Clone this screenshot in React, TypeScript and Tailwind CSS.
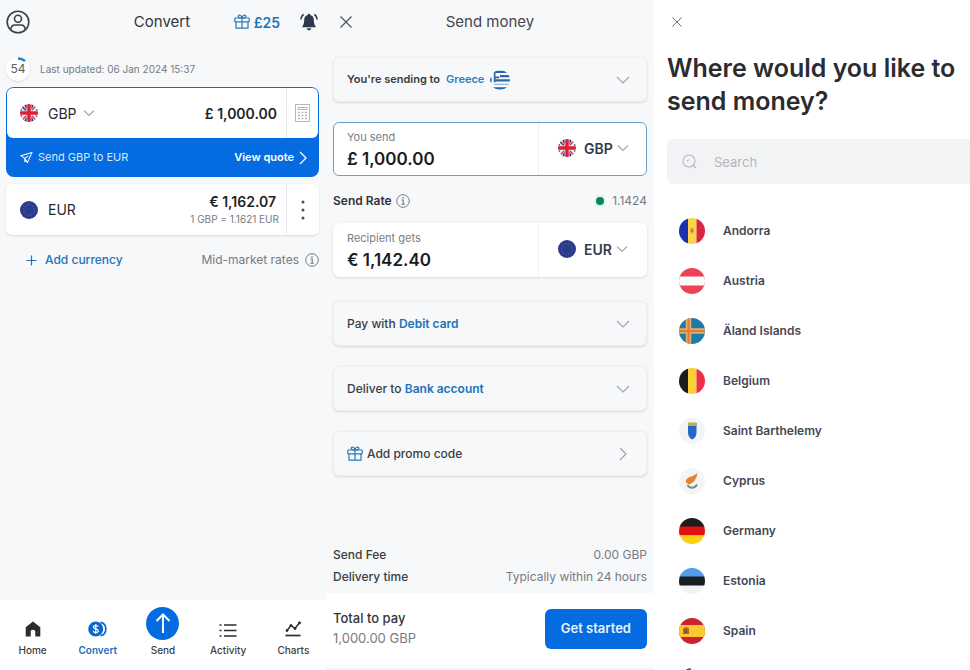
import { useState, type ReactNode } from "react";

/* ---------- Flags ---------- */

function Flag({ children, className = "size-[26px]" }: { children: ReactNode; className?: string }) {
  return (
    <svg viewBox="0 0 26 26" aria-hidden="true" className={`${className} shrink-0 overflow-hidden rounded-full`}>
      {children}
    </svg>
  );
}

function UkFlag() {
  return (
    <Flag className="size-[18px]">
      <rect width="26" height="26" fill="#f3f4f8" />
      <g fill="#2a3470">
        <path d="M0 9.5V5.5L4 9.5Z M5 0H9.5V8Z M3 3L9.5 9.5H7L1 4Z" />
        <path d="M26 9.5V5.5L22 9.5Z M21 0H16.5V8Z" />
        <path d="M0 16.5V20.5L4 16.5Z M5 26H9.5V18Z" />
        <path d="M26 16.5V20.5L22 16.5Z M21 26H16.5V18Z" />
      </g>
      <path d="M3 3L9 9M23 3L17 9M3 23L9 17M23 23L17 17" stroke="#d5364a" strokeWidth="2" />
      <path d="M13 0V26M0 13H26" stroke="#dd1f35" strokeWidth="5" />
    </Flag>
  );
}

function EuFlag() {
  return (
    <Flag className="size-[18px]">
      <rect width="26" height="26" fill="#2a3a8c" />
      <circle cx="13" cy="13" r="7.5" fill="none" stroke="#7d83a0" strokeWidth="1.3" strokeDasharray="1.4 2.53" />
    </Flag>
  );
}

function GreeceFlag() {
  return (
    <Flag className="size-5">
      <rect width="26" height="26" fill="#f6f8fa" />
      <path d="M6 2.5H26M13 8H26M6 13.500H26M3 24H23" stroke="#2a66ab" strokeWidth="3" />
      <path d="M5 18.500H26" stroke="#7ba3cd" strokeWidth="1.500" />
      <path d="M1 10V16M6 3V16M6 9.500H12" stroke="#2a66ab" strokeWidth="2.200" />
    </Flag>
  );
}

const countries: { name: string; flag: ReactNode }[] = [
  {
    name: "Andorra",
    flag: (
      <>
        <rect width="9" height="26" fill="#1a2fae" />
        <rect x="9" width="8.5" height="26" fill="#fbd44a" />
        <rect x="17.5" width="9" height="26" fill="#dc2540" />
        <path d="M11 10H15V14L13 16.5L11 14Z" fill="#e5a640" />
        <path d="M12 11.5H14V14H12Z" fill="#c97a3a" />
      </>
    ),
  },
  {
    name: "Austria",
    flag: (
      <>
        <rect width="26" height="26" fill="#ee4056" />
        <rect y="8.5" width="26" height="9" fill="#fafafa" />
      </>
    ),
  },
  {
    name: "Äland Islands",
    flag: (
      <>
        <rect width="26" height="26" fill="#1e7ba8" />
        <path d="M9.5 0V26M0 13H26" stroke="#e8ae5c" strokeWidth="5.500" />
        <path d="M9.5 0V26M0 13H26" stroke="#e07a45" strokeWidth="2" />
      </>
    ),
  },
  {
    name: "Belgium",
    flag: (
      <>
        <rect width="9" height="26" fill="#1c1c1c" />
        <rect x="9" width="8.5" height="26" fill="#fccf35" />
        <rect x="17.5" width="9" height="26" fill="#ee2f45" />
      </>
    ),
  },
  {
    name: "Saint Barthelemy",
    flag: (
      <>
        <rect width="26" height="26" fill="#f3f4f6" />
        <path d="M9 5H17.5V14C17.500 18.500 15.500 20.500 13.200 21.500C11 20.500 9 18.500 9 14Z" fill="#2767c9" />
        <path d="M9 4.500H17.500V8H9Z" fill="#b3b34a" />
      </>
    ),
  },
  {
    name: "Cyprus",
    flag: (
      <>
        <rect width="26" height="26" fill="#f3f4f6" />
        <path d="M7 14C6.500 11 9 9.500 12 8.500C14.500 8 16.500 6 18.500 5C18 8 17.500 10 16 11.500C16 13.500 13 14.500 11.500 16C9.500 16.500 8 16 7 14Z" fill="#e58435" />
        <path d="M8.500 17C10.500 20.500 15.500 21 18 16.500" fill="none" stroke="#6f927b" strokeWidth="1.8" />
      </>
    ),
  },
  {
    name: "Germany",
    flag: (
      <>
        <rect width="26" height="9" fill="#1d1b1b" />
        <rect y="8.500" width="26" height="9" fill="#e11212" />
        <rect y="17.500" width="26" height="9" fill="#fdcf14" />
      </>
    ),
  },
  {
    name: "Estonia",
    flag: (
      <>
        <rect width="26" height="26" fill="#f1f2f3" />
        <rect width="26" height="9" fill="#549de6" />
        <rect y="8.500" width="26" height="9" fill="#1b1e20" />
      </>
    ),
  },
  {
    name: "Spain",
    flag: (
      <>
        <rect width="26" height="26" fill="#cf2230" />
        <rect y="7" width="26" height="12" fill="#fcc92c" />
        <path d="M4 10.500L7 9L10 10.500V16H4Z" fill="#b0622b" />
        <path d="M6 12H8V15H6Z" fill="#8e4630" />
      </>
    ),
  },
  {
    name: "Finland",
    flag: (
      <>
        <rect width="26" height="26" fill="#f1f4f8" />
        <path d="M9.500 0V26M0 13H26" stroke="#28569c" strokeWidth="4.500" />
      </>
    ),
  },
];

/* ---------- Icons ---------- */

function ChevronDown() {
  return (
    <svg viewBox="0 0 14 14" aria-hidden="true" className="pointer-events-none size-3.5 shrink-0 text-[#a3a6ab]" fill="none" stroke="currentColor" strokeWidth="1.2">
      <path d="M1 4L7 10L13 4" />
    </svg>
  );
}

function SmallChevronDown() {
  return (
    <svg viewBox="0 0 12 12" aria-hidden="true" className="pointer-events-none size-3 shrink-0 text-[#a3a6ab]" fill="none" stroke="currentColor" strokeWidth="1.2">
      <path d="M1 3.500L6 8.500L11 3.500" />
    </svg>
  );
}

function ChevronRight({ className }: { className: string }) {
  return (
    <svg viewBox="0 0 14 14" aria-hidden="true" className={`size-3.5 shrink-0 ${className}`} fill="none" stroke="currentColor" strokeWidth="1.300">
      <path d="M4 1L10 7L4 13" />
    </svg>
  );
}

function CloseIcon({ className }: { className: string }) {
  return (
    <svg viewBox="0 0 12 12" aria-hidden="true" className={className} fill="none" stroke="currentColor" strokeWidth="1.200">
      <path d="M0.500 0.500L11.500 11.500M11.500 0.500L0.500 11.500" />
    </svg>
  );
}

function GiftIcon() {
  return (
    <svg viewBox="0 0 16 16" aria-hidden="true" className="size-4 shrink-0 text-[#2b78b8]" fill="none" stroke="currentColor" strokeWidth="1.200" strokeLinejoin="round">
      <rect x="0.800" y="4" width="14.400" height="3.800" rx="0.600" />
      <path d="M2 7.800V14.200H14V7.800M8 4V14.200" />
      <path d="M8 4C4.500 4 3.800 2.800 4.300 1.800C5.200 0.400 7.500 1.200 8 4C8.500 1.200 10.800 0.400 11.700 1.800C12.200 2.800 11.500 4 8 4Z" />
    </svg>
  );
}

function InfoIcon() {
  return (
    <svg viewBox="0 0 14 14" aria-hidden="true" className="size-3.5 shrink-0 text-[#767b85]" fill="none" stroke="currentColor">
      <circle cx="7" cy="7" r="6.300" strokeWidth="1" />
      <path d="M5.600 6H7.200V10.200M5.200 10.300H9" strokeWidth="1.100" />
      <circle cx="7" cy="3.900" r="0.800" fill="currentColor" stroke="none" />
    </svg>
  );
}

function UserIcon() {
  return (
    <svg viewBox="0 0 24 24" aria-hidden="true" className="size-6" fill="none" stroke="#3a3f4d" strokeWidth="1.600">
      <circle cx="12" cy="12" r="10.800" />
      <circle cx="12" cy="8.800" r="3.500" />
      <path d="M4.800 19.500C5 16.500 6.500 15 9 15H15C17.500 15 19 16.500 19.200 19.500" />
    </svg>
  );
}

function BellIcon() {
  return (
    <svg viewBox="0 0 18 18" aria-hidden="true" className="size-[18px]" fill="#2e374c">
      <path d="M9 0.800C9.800 0.800 10.200 1.300 10.200 2C12.800 2.500 13.800 4.500 13.800 7C13.800 10.500 14.600 11.800 15.600 13.200V14.200H2.400V13.200C3.400 11.800 4.200 10.500 4.200 7C4.200 4.500 5.200 2.500 7.800 2C7.800 1.300 8.200 0.800 9 0.800Z" />
      <path d="M6.800 15.200H11.200C10.900 16.700 10.200 17.300 9 17.300S7.100 16.700 6.800 15.200Z" />
      <path d="M3.700 1.300C1.800 2.500 1 4.300 0.900 6.500M14.300 1.300C16.200 2.500 17 4.300 17.100 6.500" fill="none" stroke="#2e374c" strokeWidth="1.400" />
    </svg>
  );
}

function CalculatorIcon() {
  return (
    <svg viewBox="0 0 15 18" aria-hidden="true" className="h-[18px] w-[15px]" fill="none" stroke="#b3b6ba" strokeWidth="1">
      <rect x="0.500" y="0.500" width="14" height="17" />
      <path d="M3 3.500H12V5.500H3Z" />
      <path d="M3 8.500H12M3 11.500H12M3 14.500H12" strokeDasharray="2 1.500" strokeWidth="1.300" />
    </svg>
  );
}

function PlaneIcon() {
  return (
    <svg viewBox="0 0 14 14" aria-hidden="true" className="size-[13px] shrink-0" fill="none" stroke="#ffffff" strokeWidth="1.100" strokeLinejoin="round">
      <path d="M13 1.500L0.800 5L5.200 8L8 12.500Z" />
      <path d="M5.200 8L9 5.200M5.200 8V11.500L6.500 10.200" />
    </svg>
  );
}

/* ---------- Convert screen ---------- */

const tabs: { label: string; icon: ReactNode }[] = [
  {
    label: "Home",
    icon: (
      <svg viewBox="0 0 16 16" className="size-4" fill="#2c2c2e">
        <path d="M8 0.500L15.300 6.200V15.500H10.300V11C10.300 9.700 9.300 8.800 8 8.800S5.700 9.700 5.700 11V15.500H0.700V6.200Z" />
      </svg>
    ),
  },
  {
    label: "Convert",
    icon: (
      <svg viewBox="0 0 19 16" className="h-4 w-[19px]" fill="none">
        <circle cx="7.700" cy="8" r="7.500" fill="#0b68cb" />
        <path d="M12.500 1.300C19.600 2.500 19.600 13.500 12.500 14.700" stroke="#0b68cb" strokeWidth="1.700" />
        <path d="M10.200 6C10 4.900 9 4.500 7.800 4.500C6.500 4.500 5.400 5 5.400 6.200C5.400 8.500 10.300 7.200 10.300 9.700C10.300 11 9.100 11.500 7.800 11.500C6.400 11.500 5.400 11 5.200 9.800M7.800 3V13" stroke="#ffffff" strokeWidth="1.200" />
      </svg>
    ),
  },
  {
    label: "Send",
    icon: (
      <span className="flex size-[33px] items-center justify-center rounded-full bg-[#046be0]">
        <svg viewBox="0 0 20 20" className="size-5" fill="none" stroke="#ffffff" strokeWidth="2">
          <path d="M10 20V1M3.500 8L10 1.500L16.500 8" />
        </svg>
      </span>
    ),
  },
  {
    label: "Activity",
    icon: (
      <svg viewBox="0 0 18 14" className="h-3.5 w-[18px]" fill="none" stroke="#2c2c2e" strokeWidth="1.600">
        <path d="M0.500 2H2.500M0.500 7.500H2.500M0.500 13H2.500M5 2H17.500M5 7.500H17.500M5 13H17.500" />
      </svg>
    ),
  },
  {
    label: "Charts",
    icon: (
      <svg viewBox="0 0 18 16" className="h-4 w-[18px]" fill="#2c2c2e" stroke="#2c2c2e">
        <path d="M3 9.500L7 4.500L11 7.500L15.500 1.800" fill="none" strokeWidth="1.500" />
        <circle cx="3" cy="9.500" r="1" />
        <circle cx="7" cy="4.500" r="1" />
        <circle cx="11" cy="7.500" r="1" />
        <circle cx="15.500" cy="1.800" r="1" />
        <path d="M1.500 14.500H16.500" strokeWidth="1.700" />
      </svg>
    ),
  },
];

function ConvertScreen() {
  return (
    <section className="flex min-w-0 flex-col bg-[#f6f8fa]">
      <header className="grid h-11 grid-cols-[1fr_auto_1fr] items-center pr-2 pl-1.5">
        <button type="button" aria-label="Profile" className="justify-self-start">
          <UserIcon />
        </button>
        <h1 className="text-[15px] text-[#333539]">Convert</h1>
        <div className="flex items-center justify-end gap-5">
          <button type="button" className="flex items-center gap-1 text-[14px] font-semibold text-[#2273b9]">
            <GiftIcon />
            £25
          </button>
          <button type="button" aria-label="Notifications">
            <BellIcon />
          </button>
        </div>
      </header>

      <div className="mt-[11px] flex h-7 items-center gap-2.5 px-1.5">
        <span className="relative flex size-6 items-center justify-center rounded-full bg-white text-[12px] text-[#5b5e64] shadow-sm">
          54
          <svg viewBox="0 0 24 24" aria-hidden="true" className="absolute inset-0 size-6" fill="none" stroke="#2380bb" strokeWidth="2.500">
            <path d="M12 1.500Q16 1.500 19 4" />
          </svg>
        </span>
        <p className="text-[10px] text-[#777b82]">Last updated: 06 Jan 2024 15:37</p>
      </div>

      <div className="mt-1 mr-[7px] ml-1.5 rounded-lg bg-[#046be0] px-px pt-px">
        <div className="flex h-[50px] items-center rounded-md bg-white">
          <label className="flex items-center gap-2.5 pl-[13px]">
            <UkFlag />
            <span className="flex items-center gap-1.5">
              <select aria-label="Base currency" className="appearance-none bg-transparent text-[14px] text-[#27292d] [field-sizing:content]">
                <option>GBP</option>
              </select>
              <SmallChevronDown />
            </span>
          </label>
          <input
            aria-label="Base amount"
            defaultValue="£ 1,000.00"
            className="h-full min-w-0 flex-1 pr-[9px] text-right text-[14px] font-semibold text-[#1d1f23] outline-none"
          />
          <button type="button" aria-label="Calculator" className="flex h-full w-8 items-center justify-center border-l border-[#e9ebee]">
            <CalculatorIcon />
          </button>
        </div>
        <div className="flex h-[39px] items-center justify-between pr-2 pl-[13px]">
          <span className="flex items-center gap-[5px] text-[11px] text-[#d7e8fc]">
            <PlaneIcon />
            Send GBP to EUR
          </span>
          <button type="button" className="flex items-center gap-0.5 text-[11px] font-semibold text-white">
            View quote
            <ChevronRight className="text-white" />
          </button>
        </div>
      </div>

      <div className="mt-[7px] mr-[7px] ml-1.5 flex h-[51px] items-center rounded-md bg-white shadow-sm">
        <span className="flex flex-1 items-center gap-2.5 pl-3.5 text-[14px] text-[#27292d]">
          <EuFlag />
          EUR
        </span>
        <span className="flex flex-col items-end pr-[7px]">
          <span className="pr-[3px] text-[14px] leading-[18px] font-semibold text-[#1d1f23]">€ 1,162.07</span>
          <span className="text-[10px] leading-4 text-[#777b82]">1 GBP = 1.1621 EUR</span>
        </span>
        <button type="button" aria-label="More options" className="flex h-full w-[33px] items-center justify-center border-l border-[#e9ebee]">
          <svg viewBox="0 0 4 20" className="h-5 w-1" fill="#4a4d54">
            <circle cx="2" cy="2" r="1.500" />
            <circle cx="2" cy="10" r="1.500" />
            <circle cx="2" cy="18" r="1.500" />
          </svg>
        </button>
      </div>

      <div className="mt-4 flex h-[18px] items-center justify-between pr-[7px] pl-[26px]">
        <button type="button" className="flex items-center gap-2 text-[12px] font-medium text-[#2273b9]">
          <svg viewBox="0 0 11 11" aria-hidden="true" className="size-[11px]" stroke="currentColor" strokeWidth="1.200">
            <path d="M5.500 0.500V10.500M0.500 5.500H10.500" />
          </svg>
          Add currency
        </button>
        <span className="flex items-center gap-1.5 text-[12px] text-[#777b82]">
          Mid-market rates
          <InfoIcon />
        </span>
      </div>

      <nav className="mt-auto grid h-[70px] grid-cols-5 bg-white">
        {tabs.map((tab) => (
          <button
            key={tab.label}
            type="button"
            className={
              tab.label === "Convert"
                ? "flex flex-col items-center text-[10px] leading-4 font-semibold text-[#1c6fba]"
                : "flex flex-col items-center text-[10px] leading-4 font-medium text-[#3c3e43]"
            }
          >
            <span className={tab.label === "Send" ? "flex h-[42px] items-center pt-1" : "flex h-[42px] items-end pb-[5px]"}>{tab.icon}</span>
            {tab.label}
          </button>
        ))}
      </nav>
    </section>
  );
}

/* ---------- Send money screen ---------- */

function AmountField({
  id,
  label,
  amount,
  currency,
  flag,
  active = false,
}: {
  id: string;
  label: string;
  amount: string;
  currency: string;
  flag: ReactNode;
  active?: boolean;
}) {
  return (
    <div
      className={
        active
          ? "flex h-[54px] items-stretch rounded-md border border-[#6a9fc4] bg-white"
          : "flex h-[54px] items-stretch rounded-md border border-white bg-white shadow-sm"
      }
    >
      <div className="flex min-w-0 flex-1 flex-col justify-center pl-[13px]">
        <label htmlFor={id} className="pt-1 text-[11px] leading-4 text-[#7b7e84]">
          {label}
        </label>
        <input id={id} defaultValue={amount} className="h-7 w-full bg-transparent text-[17px] leading-6 font-semibold text-[#191b1f] outline-none" />
      </div>
      <label className="flex w-[108px] items-center gap-2 border-l border-[#eef0f2] pb-0.5 pl-[19px]">
        {flag}
        <select aria-label={`${label} currency`} className="appearance-none bg-transparent text-[14px] font-semibold text-[#333a4b] [field-sizing:content]">
          <option>{currency}</option>
        </select>
        <span className="-ml-1">
          <SmallChevronDown />
        </span>
      </label>
    </div>
  );
}

function OptionRow({ children, trailing }: { children: ReactNode; trailing: ReactNode }) {
  return (
    <button
      type="button"
      className="flex h-[45px] w-full items-center justify-between rounded-md border border-[#eceef0] bg-[#f6f8f9] pr-4 pl-[13px] text-left text-[12px] font-medium text-[#3b3d42] shadow-sm"
    >
      {children}
      {trailing}
    </button>
  );
}

function SendScreen() {
  return (
    <section className="flex min-w-0 flex-col bg-[#f6f8fa]">
      <div className="flex flex-1 flex-col px-[7px]">
        <header className="grid h-11 grid-cols-[1fr_auto_1fr] items-center">
          <button type="button" aria-label="Close" className="ml-[7px] justify-self-start text-[#4f545e]">
            <CloseIcon className="size-3" />
          </button>
          <h1 className="text-[15px] text-[#45474c]">Send money</h1>
        </header>

        <div className="mt-[13px]">
          <OptionRow trailing={<ChevronDown />}>
            <span className="flex items-center gap-1.5 text-[11px] font-semibold">
              You&apos;re sending to <span className="text-[#2d7cc1]">Greece</span>
              <GreeceFlag />
            </span>
          </OptionRow>
        </div>

        <div className="mt-5">
          <AmountField id="send-amount" label="You send" amount="£ 1,000.00" currency="GBP" flag={<UkFlag />} active />
        </div>

        <div className="flex h-[47px] items-center justify-between pt-0.5 text-[12px]">
          <span className="flex items-center gap-1 font-semibold text-[#303238]">
            Send Rate
            <InfoIcon />
          </span>
          <span className="flex items-center gap-2 text-[#777b82]">
            <span className="size-2 rounded-full bg-[#078656] ring-2 ring-[#dcf5ec]" />
            1.1424
          </span>
        </div>

        <AmountField id="receive-amount" label="Recipient gets" amount="€ 1,142.40" currency="EUR" flag={<EuFlag />} />

        <div className="mt-6 flex flex-col gap-5">
          <OptionRow trailing={<ChevronDown />}>
            <span>
              Pay with <span className="font-semibold text-[#1f72ba]">Debit card</span>
            </span>
          </OptionRow>
          <OptionRow trailing={<ChevronDown />}>
            <span>
              Deliver to <span className="font-semibold text-[#1f72ba]">Bank account</span>
            </span>
          </OptionRow>
          <OptionRow trailing={<ChevronRight className="text-[#a3a6ab]" />}>
            <span className="flex items-center gap-1">
              <GiftIcon />
              Add promo code
            </span>
          </OptionRow>
        </div>

        <dl className="mt-auto flex flex-col gap-1 pb-[7px] text-[12px] leading-[18px]">
          <div className="flex justify-between">
            <dt className="font-medium text-[#3b3d42]">Send Fee</dt>
            <dd className="text-[#777b82]">0.00 GBP</dd>
          </div>
          <div className="flex justify-between">
            <dt className="font-medium text-[#3b3d42]">Delivery time</dt>
            <dd className="text-[#777b82]">Typically within 24 hours</dd>
          </div>
        </dl>
      </div>

      <footer className="flex h-[77px] items-center justify-between border-b-2 border-[#f3f4f5] bg-white px-[7px] pb-1">
        <p className="flex flex-col pb-0.5 leading-5">
          <span className="text-[13px] font-medium text-[#333539]">Total to pay</span>
          <span className="text-[13px] text-[#777b82]">1,000.00 GBP</span>
        </p>
        <button type="button" className="h-10 rounded-md bg-[#046be0] px-4 text-[13px] font-semibold text-[#e9f3fe]">
          Get started
        </button>
      </footer>
    </section>
  );
}

/* ---------- Destination screen ---------- */

function DestinationScreen() {
  const [query, setQuery] = useState("");
  const visible = countries.filter((country) => country.name.toLowerCase().includes(query.toLowerCase()));

  return (
    <section className="flex min-h-0 min-w-0 flex-col overflow-hidden bg-white pl-[13px]">
      <header className="flex h-11 shrink-0 items-center pl-[5px]">
        <button type="button" aria-label="Close" className="text-[#6b6d72]">
          <CloseIcon className="size-2.5" />
        </button>
      </header>
      <h1 className="mt-2 shrink-0 text-[25px] leading-[33px] font-semibold text-[#2b2c30]">Where would you like to send money?</h1>

      <label className="mt-[21px] flex h-[45px] shrink-0 items-center gap-[17px] rounded-l-md bg-[#f2f3f4] pl-[15px]">
        <svg viewBox="0 0 15 15" aria-hidden="true" className="size-[15px] shrink-0" fill="none" stroke="#b9bbc2" strokeWidth="1.100">
          <circle cx="7" cy="7" r="6" />
          <path d="M10.500 10.500L14 14M4.800 7.200L7 5.500" />
        </svg>
        <input
          type="search"
          aria-label="Search countries"
          placeholder="Search"
          value={query}
          onChange={(event) => setQuery(event.target.value)}
          className="h-full min-w-0 flex-1 bg-transparent text-[13px] text-[#33353a] outline-none placeholder:text-[#b4b6bb]"
        />
      </label>

      <ul className="mt-[22px]">
        {visible.map((country) => (
          <li key={country.name}>
            <button type="button" className="flex h-[50px] w-full items-center gap-[18px] pl-3 text-left text-[12px] font-semibold text-[#454856]">
              <Flag>{country.flag}</Flag>
              {country.name}
            </button>
          </li>
        ))}
      </ul>
    </section>
  );
}

export default function App() {
  return (
    <main className="grid h-screen grid-cols-[326fr_328fr_316fr] overflow-hidden bg-white font-['Inter','Liberation_Sans',sans-serif]">
      <ConvertScreen />
      <SendScreen />
      <DestinationScreen />
    </main>
  );
}
